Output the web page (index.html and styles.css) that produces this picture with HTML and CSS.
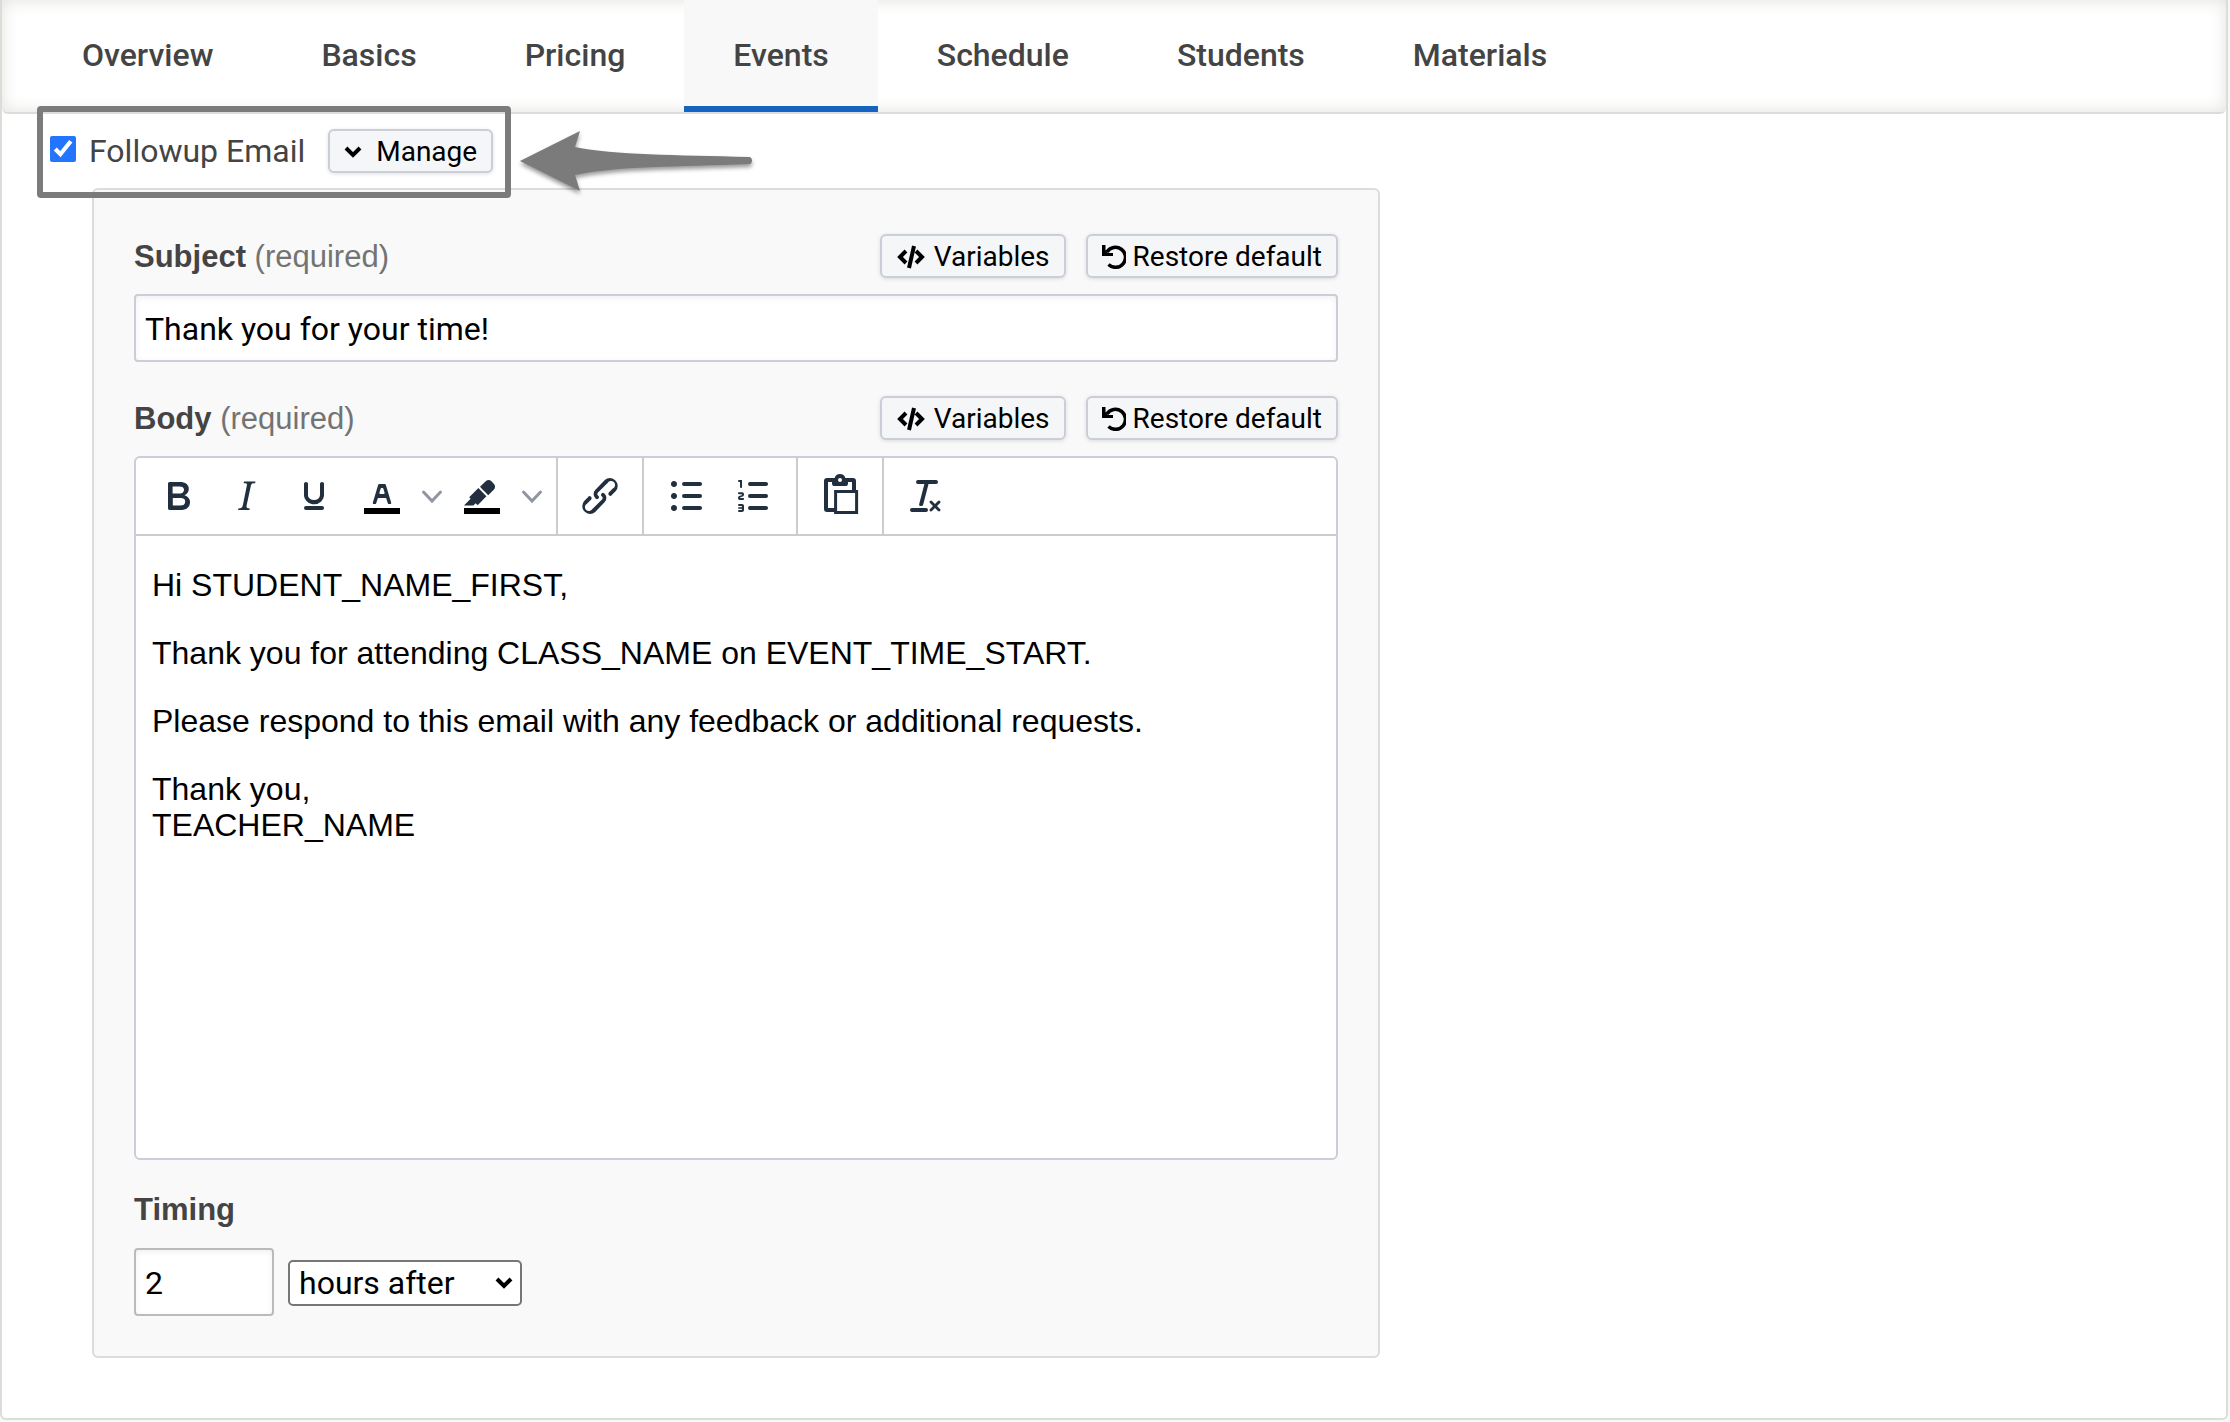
FILE: index.html
```html
<!DOCTYPE html>
<html lang="en">
<head>
<meta charset="utf-8">
<title>Class events</title>
<link rel="stylesheet" href="styles.css">
</head>
<body>
<svg class="defs" aria-hidden="true">
  <symbol id="code" viewBox="0 0 30 24"><path d="M10 6 4 12l6 6M20 6l6 6-6 6M18 1l-5 22" fill="none" stroke="currentColor" stroke-width="4"/></symbol>
  <symbol id="undo" viewBox="0 0 24 24"><path d="M5 7a10 10 0 1 1 1.500 12.500" fill="none" stroke="currentColor" stroke-width="3.500"/><path d="M0 0h3.500v5L6 8h5v3H0z" fill="currentColor"/></symbol>
  <symbol id="down" viewBox="0 0 24 24"><path d="M3.500 8l8.500 9 8.500-9" fill="none" stroke="currentColor" stroke-width="3" stroke-linecap="round"/></symbol>
  <symbol id="chevron" viewBox="0 0 18 12"><path d="M2 2l7 7 7-7" fill="none" stroke="currentColor" stroke-width="4"/></symbol>
</svg>
<main class="page">
  <nav class="tabs">
    <a class="tab" href="#overview">Overview</a>
    <a class="tab" href="#basics">Basics</a>
    <a class="tab" href="#pricing">Pricing</a>
    <a class="tab tab-active" href="#events" aria-current="page">Events</a>
    <a class="tab" href="#schedule">Schedule</a>
    <a class="tab" href="#students">Students</a>
    <a class="tab" href="#materials">Materials</a>
  </nav>
  <div class="toggle-row">
    <input class="tick" type="checkbox" id="followup" checked>
    <label class="toggle-label" for="followup">Followup Email</label>
    <button class="btn" type="button"><svg class="i-chevron" aria-hidden="true"><use href="#chevron"/></svg>Manage</button>
    <div class="callout-box"></div>
    <svg class="callout-arrow" viewBox="0 0 240 70" aria-hidden="true"><path d="M2 31 62 1l-5 16c40 8 100 8 175 10a4 4 0 0 1 0 7c-74 3-134 2-175 11l5 16z" fill="#7b7b7b"/></svg>
  </div>
  <form class="panel">
    <div class="field-head">
      <label class="field-label" for="subject">Subject <span class="required">(required)</span></label>
      <button class="btn" type="button"><svg class="i-code" aria-hidden="true"><use href="#code"/></svg>Variables</button>
      <button class="btn" type="button"><svg class="i-undo" aria-hidden="true"><use href="#undo"/></svg>Restore default</button>
    </div>
    <input class="text-input" id="subject" type="text" value="Thank you for your time!">
    <div class="field-head field-head-next">
      <span class="field-label" id="body-label">Body <span class="required">(required)</span></span>
      <button class="btn" type="button"><svg class="i-code" aria-hidden="true"><use href="#code"/></svg>Variables</button>
      <button class="btn" type="button"><svg class="i-undo" aria-hidden="true"><use href="#undo"/></svg>Restore default</button>
    </div>
    <div class="editor">
      <div class="toolbar" role="toolbar" aria-label="Formatting">
        <div class="group">
          <button class="tool" type="button" aria-label="Bold"><svg viewBox="0 0 24 24"><path d="M7.800 19c-.3 0-.5 0-.6-.2l-.2-.5V5.700c0-.2 0-.4.2-.5l.6-.2h5c1.500 0 2.700.3 3.500 1 .7.600 1.100 1.400 1.100 2.500a3 3 0 0 1-.6 1.900c-.4.600-1 1-1.600 1.200.4.100.9.300 1.300.6s.8.700 1 1.200c.4.400.5 1 .5 1.600 0 1.300-.4 2.300-1.300 3-.8.700-2.100 1-3.800 1H7.800zm5-8.300c.6 0 1.200-.1 1.600-.5.400-.3.600-.7.600-1.300 0-1.100-.8-1.700-2.300-1.700H9.300v3.500h3.400zm.5 6c.7 0 1.300-.1 1.700-.4.400-.4.600-.9.600-1.500s-.2-1-.7-1.400c-.4-.3-1-.4-2-.4H9.400v3.800h4z"/></svg></button>
          <button class="tool" type="button" aria-label="Italic"><svg viewBox="0 0 24 24"><path d="m16.700 4.700-.1.900h-.3c-.6 0-1 0-1.400.3-.3.300-.4.600-.5 1.100l-2.100 9.800v.6c0 .5.400.8 1.400.8h.2l-.2.800H8l.2-.8h.2c1.100 0 1.800-.5 2-1.500l2-9.800.1-.5c0-.6-.4-.8-1.400-.8h-.3l.2-.9h5.800z"/></svg></button>
          <button class="tool" type="button" aria-label="Underline"><svg viewBox="0 0 24 24"><path d="M16 5c.6 0 1 .4 1 1v5.500a4 4 0 0 1-.4 1.800l-1 1.400a5.300 5.300 0 0 1-5.500 1 5 5 0 0 1-1.600-1c-.5-.4-.8-.9-1.100-1.400a4 4 0 0 1-.4-1.800V6c0-.6.4-1 1-1s1 .4 1 1v5.500c0 .3 0 .6.200 1l.6.700a3.300 3.300 0 0 0 2.200.8 3.400 3.400 0 0 0 2.200-.8c.3-.2.400-.5.600-.8l.2-.9V6c0-.6.400-1 1-1zM8 17h8c.6 0 1 .4 1 1s-.4 1-1 1H8a1 1 0 0 1 0-2z"/></svg></button>
          <button class="tool" type="button" aria-label="Text color"><svg viewBox="0 0 24 24"><path d="M3 18h18v3H3z" fill="#000"/><path d="M8.700 16h-.8a.5.500 0 0 1-.5-.6l2.700-9c.1-.3.300-.4.500-.4h2.800c.2 0 .4.100.5.400l2.700 9a.5.500 0 0 1-.5.600h-.8a.5.500 0 0 1-.4-.4l-.7-2.200c0-.3-.3-.4-.5-.4h-3.400c-.2 0-.4.100-.5.400l-.7 2.200c0 .3-.2.400-.4.400zm2.600-7.600-.6 2a.5.500 0 0 0 .5.600h1.600a.5.500 0 0 0 .5-.6l-.6-2c0-.3-.3-.4-.5-.4h-.4c-.2 0-.4.100-.5.400z"/></svg></button>
          <button class="tool tool-menu" type="button" aria-label="Text color menu"><svg><use href="#down"/></svg></button>
          <button class="tool" type="button" aria-label="Background color"><svg viewBox="0 0 24 24"><path d="M3 18h18v3H3z" fill="#000"/><path d="M7.700 16.700H3l3.300-3.300-.7-.8L10.200 8l4 4.100-4 4.200c-.2.200-.6.200-.8 0l-.6-.7-1.100 1.100zm5-7.500L11 7.400l3-2.900a2 2 0 0 1 2.600 0L18 6c.7.700.7 2 0 2.700l-2.900 2.900-1.800-1.800-.5-.6"/></svg></button>
          <button class="tool tool-menu" type="button" aria-label="Background color menu"><svg><use href="#down"/></svg></button>
        </div>
        <div class="group">
          <button class="tool" type="button" aria-label="Link"><svg viewBox="0 0 24 24"><path d="M6.200 12.300a1 1 0 0 1 1.400 1.400l-2 2a2 2 0 1 0 2.600 2.800l4.800-4.800a1 1 0 0 0 0-1.400 1 1 0 1 1 1.400-1.300 2.900 2.900 0 0 1 0 4L9.600 20a3.900 3.900 0 0 1-5.500-5.500l2-2zm11.600-.6a1 1 0 0 1-1.400-1.400l2-2a2 2 0 1 0-2.600-2.800L11 10.300a1 1 0 0 0 0 1.400A1 1 0 1 1 9.600 13a2.900 2.900 0 0 1 0-4L14.400 4a3.900 3.900 0 0 1 5.500 5.500l-2 2z"/></svg></button>
        </div>
        <div class="group">
          <button class="tool" type="button" aria-label="Bullet list"><svg viewBox="0 0 24 24"><path d="M11 5h8c.6 0 1 .4 1 1s-.4 1-1 1h-8a1 1 0 0 1 0-2zm0 6h8c.6 0 1 .4 1 1s-.4 1-1 1h-8a1 1 0 0 1 0-2zm0 6h8c.6 0 1 .4 1 1s-.4 1-1 1h-8a1 1 0 0 1 0-2zM4.500 6c0-.4.100-.8.400-1 .3-.4.700-.5 1.100-.5.400 0 .8.100 1 .4.400.3.500.7.500 1.100 0 .4-.1.800-.4 1-.3.400-.7.500-1.100.5-.4 0-.8-.1-1-.4-.4-.3-.5-.7-.5-1.100zm0 6c0-.4.100-.8.400-1 .3-.4.700-.5 1.100-.5.400 0 .8.100 1 .4.400.3.500.7.500 1.100 0 .4-.1.800-.4 1-.3.400-.7.500-1.100.5-.4 0-.8-.1-1-.4-.4-.3-.5-.7-.5-1.100zm0 6c0-.4.100-.8.400-1 .3-.4.700-.5 1.100-.5.400 0 .8.100 1 .4.400.3.500.7.500 1.100 0 .4-.1.800-.4 1-.3.400-.7.500-1.100.5-.4 0-.8-.1-1-.4-.4-.3-.5-.7-.5-1.100z"/></svg></button>
          <button class="tool" type="button" aria-label="Numbered list"><svg viewBox="0 0 24 24"><path d="M10 17h8c.6 0 1 .4 1 1s-.4 1-1 1h-8a1 1 0 0 1 0-2zm0-6h8c.6 0 1 .4 1 1s-.4 1-1 1h-8a1 1 0 0 1 0-2zm0-6h8c.6 0 1 .4 1 1s-.4 1-1 1h-8a1 1 0 1 1 0-2zM6 4v3.500c0 .3-.2.500-.5.500a.5.500 0 0 1-.5-.5V5h-.5a.5.500 0 0 1 0-1H6zm-1 8.800.2.200h1.300c.3 0 .5.200.5.500s-.2.500-.5.500H4.900a1 1 0 0 1-.9-1V13c0-.4.300-.8.600-1l1.200-.4.200-.3a.2.200 0 0 0-.2-.2H4.500a.5.500 0 0 1-.5-.5c0-.3.200-.5.500-.5h1.600c.5 0 .9.400.9 1v.1c0 .4-.3.800-.6 1l-1.200.4-.2.300zM7 17v2c0 .6-.4 1-1 1H4.500a.5.500 0 0 1 0-1h1.200c.2 0 .3-.1.300-.3 0-.2-.1-.3-.3-.3H4.400a.4.400 0 1 1 0-.8h1.300c.2 0 .3-.1.300-.3 0-.2-.1-.3-.3-.3H4.500a.5.500 0 1 1 0-1H6c.6 0 1 .4 1 1z"/></svg></button>
        </div>
        <div class="group">
          <button class="tool" type="button" aria-label="Paste"><svg viewBox="0 0 24 24"><path d="M10 19H5.500a.5.500 0 0 1-.5-.5v-14a.5.500 0 0 1 .5-.5h13a.5.500 0 0 1 .5.500V9" fill="none" stroke="currentColor" stroke-width="2"/><path d="M8 3h1.300a2.800 2.800 0 0 1 5.400 0H16v2.700c0 .8-.5 1.300-1.300 1.300H9.300C8.500 7 8 6.500 8 5.700z"/><circle cx="12" cy="4" r="1" fill="#fff"/><path d="M9.800 9.800h10.500v10.500H9.800z" fill="#fff" stroke="currentColor" stroke-width="1.500"/></svg></button>
        </div>
        <div class="group group-last">
          <button class="tool" type="button" aria-label="Clear formatting"><svg viewBox="0 0 24 24"><path d="M13.200 6a1 1 0 0 1 0 .2l-2.600 10a1 1 0 0 1-1 .8h-.2a.8.800 0 0 1-.8-1l2.600-10H8a1 1 0 1 1 0-2h9a1 1 0 0 1 0 2h-3.800zM5 18h7a1 1 0 0 1 0 2H5a1 1 0 0 1 0-2zm13 1.500L16.500 18 15 19.500a.7.700 0 0 1-1-1l1.500-1.500-1.500-1.500a.7.700 0 0 1 1-1l1.500 1.500 1.500-1.500a.7.700 0 0 1 1 1L17.500 17l1.500 1.500a.7.700 0 0 1-1 1z"/></svg></button>
        </div>
      </div>
      <div class="editor-body" contenteditable="true" role="textbox" aria-multiline="true" aria-labelledby="body-label">
        <p>Hi STUDENT_NAME_FIRST,</p>
        <p>Thank you for attending CLASS_NAME on EVENT_TIME_START.</p>
        <p>Please respond to this email with any feedback or additional requests.</p>
        <p>Thank you,<br>TEACHER_NAME</p>
      </div>
    </div>
    <label class="field-label timing-label" for="timing">Timing</label>
    <div class="timing-row">
      <input class="text-input timing-input" id="timing" type="text" inputmode="numeric" value="2">
      <div class="unit-wrap">
        <select class="unit" aria-label="Timing unit"><option>hours after</option><option>days after</option></select>
        <svg class="unit-arrow" aria-hidden="true"><use href="#chevron"/></svg>
      </div>
    </div>
  </form>
</main>
</body>
</html>
```

FILE: styles.css
```css
* { box-sizing: border-box; }

body {
  margin: 0;
  background: #f8f8fc;
  color: #444;
  font: 32px/40px Roboto, "Liberation Sans", sans-serif;
}

.defs { display: none; }

.page {
  margin: 0 2px 2px 0;
  padding-bottom: 60px;
  background: #fff;
  border: 2px solid #dcddd8;
  border-top: 0;
  border-radius: 0 0 6px 6px;
}

.tabs {
  display: flex;
  gap: 10px;
  height: 114px;
  padding-left: 31px;
  border-bottom: 2px solid #dcddd8;
  border-radius: 0 0 6px 6px;
  box-shadow: inset 0 0 16px rgba(60, 60, 40, .16);
}

.tab {
  padding: 35px 49px 0;
  color: #444;
  font-weight: 500;
  text-decoration: none;
}

.tab-active {
  background: #f8f8f8;
  border-bottom: 6px solid #1565c0;
}

.toggle-row {
  position: relative;
  display: flex;
  align-items: center;
  height: 74px;
  padding-left: 48px;
}

.tick {
  width: 26px;
  height: 26px;
  margin: 0 13px 4px 0;
  accent-color: #2374ff;
}

.toggle-label { margin-right: 23px; }

.btn {
  display: flex;
  align-items: center;
  height: 44px;
  padding: 2px 14px 0;
  background: #f5f6f8;
  border: 2px solid #cbced6;
  border-radius: 6px;
  box-shadow: 0 1px 4px rgba(0, 0, 0, .12);
  color: #000;
  font: 28px/40px Roboto, "Liberation Sans", sans-serif;
  white-space: nowrap;
}

.i-chevron { width: 18px; height: 12px; margin-right: 14px; }
.i-code { width: 30px; height: 24px; margin-right: 8px; }
.i-undo { width: 24px; height: 24px; margin-right: 7px; }

.callout-box {
  position: absolute;
  left: 35px;
  top: -8px;
  width: 474px;
  height: 92px;
  border: 6px solid #7b7b7b;
  border-radius: 4px;
  pointer-events: none;
}

.callout-arrow {
  position: absolute;
  left: 516px;
  top: 16px;
  width: 240px;
  height: 70px;
  filter: drop-shadow(0 3px 2px rgba(0, 0, 0, .4));
}

.panel {
  max-width: 1288px;
  margin-left: 90px;
  padding: 44px 40px 40px;
  background: #f9f9f9;
  border: 2px solid #dcddd8;
  border-radius: 6px;
}

.field-head { display: flex; align-items: center; gap: 20px; }
.field-head-next { margin-top: 34px; }

.field-label {
  flex: 1;
  padding-top: 2px;
  font: 700 31px/40px "Liberation Sans", Arial, sans-serif;
}

.required { color: #737373; font-weight: 400; }

.text-input {
  display: block;
  width: 100%;
  height: 68px;
  margin-top: 16px;
  padding: 2px 9px 0;
  background: #fff;
  border: 2px solid #cbced6;
  border-radius: 4px;
  box-shadow: inset 0 2px 6px rgba(0, 0, 0, .06);
  color: #000;
  font: 32px/40px Roboto, "Liberation Sans", sans-serif;
}

.editor {
  margin-top: 16px;
  background: #fff;
  border: 2px solid #cbced6;
  border-radius: 6px;
}

.toolbar { display: flex; height: 78px; border-bottom: 2px solid #ccc; }

.group {
  display: flex;
  align-items: center;
  padding: 0 8px;
  border-right: 2px solid #ccc;
}

.group-last { border-right: 0; }

.tool {
  display: grid;
  place-items: center;
  width: 68px;
  height: 68px;
  padding: 0;
  background: none;
  border: 0;
  color: #222f3e;
}

.tool svg { width: 48px; height: 48px; fill: currentColor; }
.tool-menu { width: 32px; color: #8f96a0; }
.tool-menu svg { width: 24px; height: 24px; }

.editor-body {
  min-height: 622px;
  padding: 31px 16px;
  color: #000;
  font: 32px/36px "Liberation Sans", Arial, sans-serif;
  outline: none;
}

.editor-body p { margin: 0 0 32px; }

.timing-label { display: block; margin-top: 28px; }

.timing-row { display: flex; align-items: center; gap: 14px; padding-top: 2px; }
.timing-input { width: 140px; border-color: #bbb; }

.unit-wrap { position: relative; margin-top: 18px; }

.unit {
  display: block;
  width: 234px;
  height: 46px;
  padding: 0 9px;
  appearance: none;
  background: #fff;
  border: 2px solid #767676;
  border-radius: 5px;
  color: #000;
  font: 32px/40px Roboto, "Liberation Sans", sans-serif;
}

.unit-arrow {
  position: absolute;
  right: 9px;
  top: 17px;
  width: 18px;
  height: 12px;
  color: #000;
  pointer-events: none;
}
```
